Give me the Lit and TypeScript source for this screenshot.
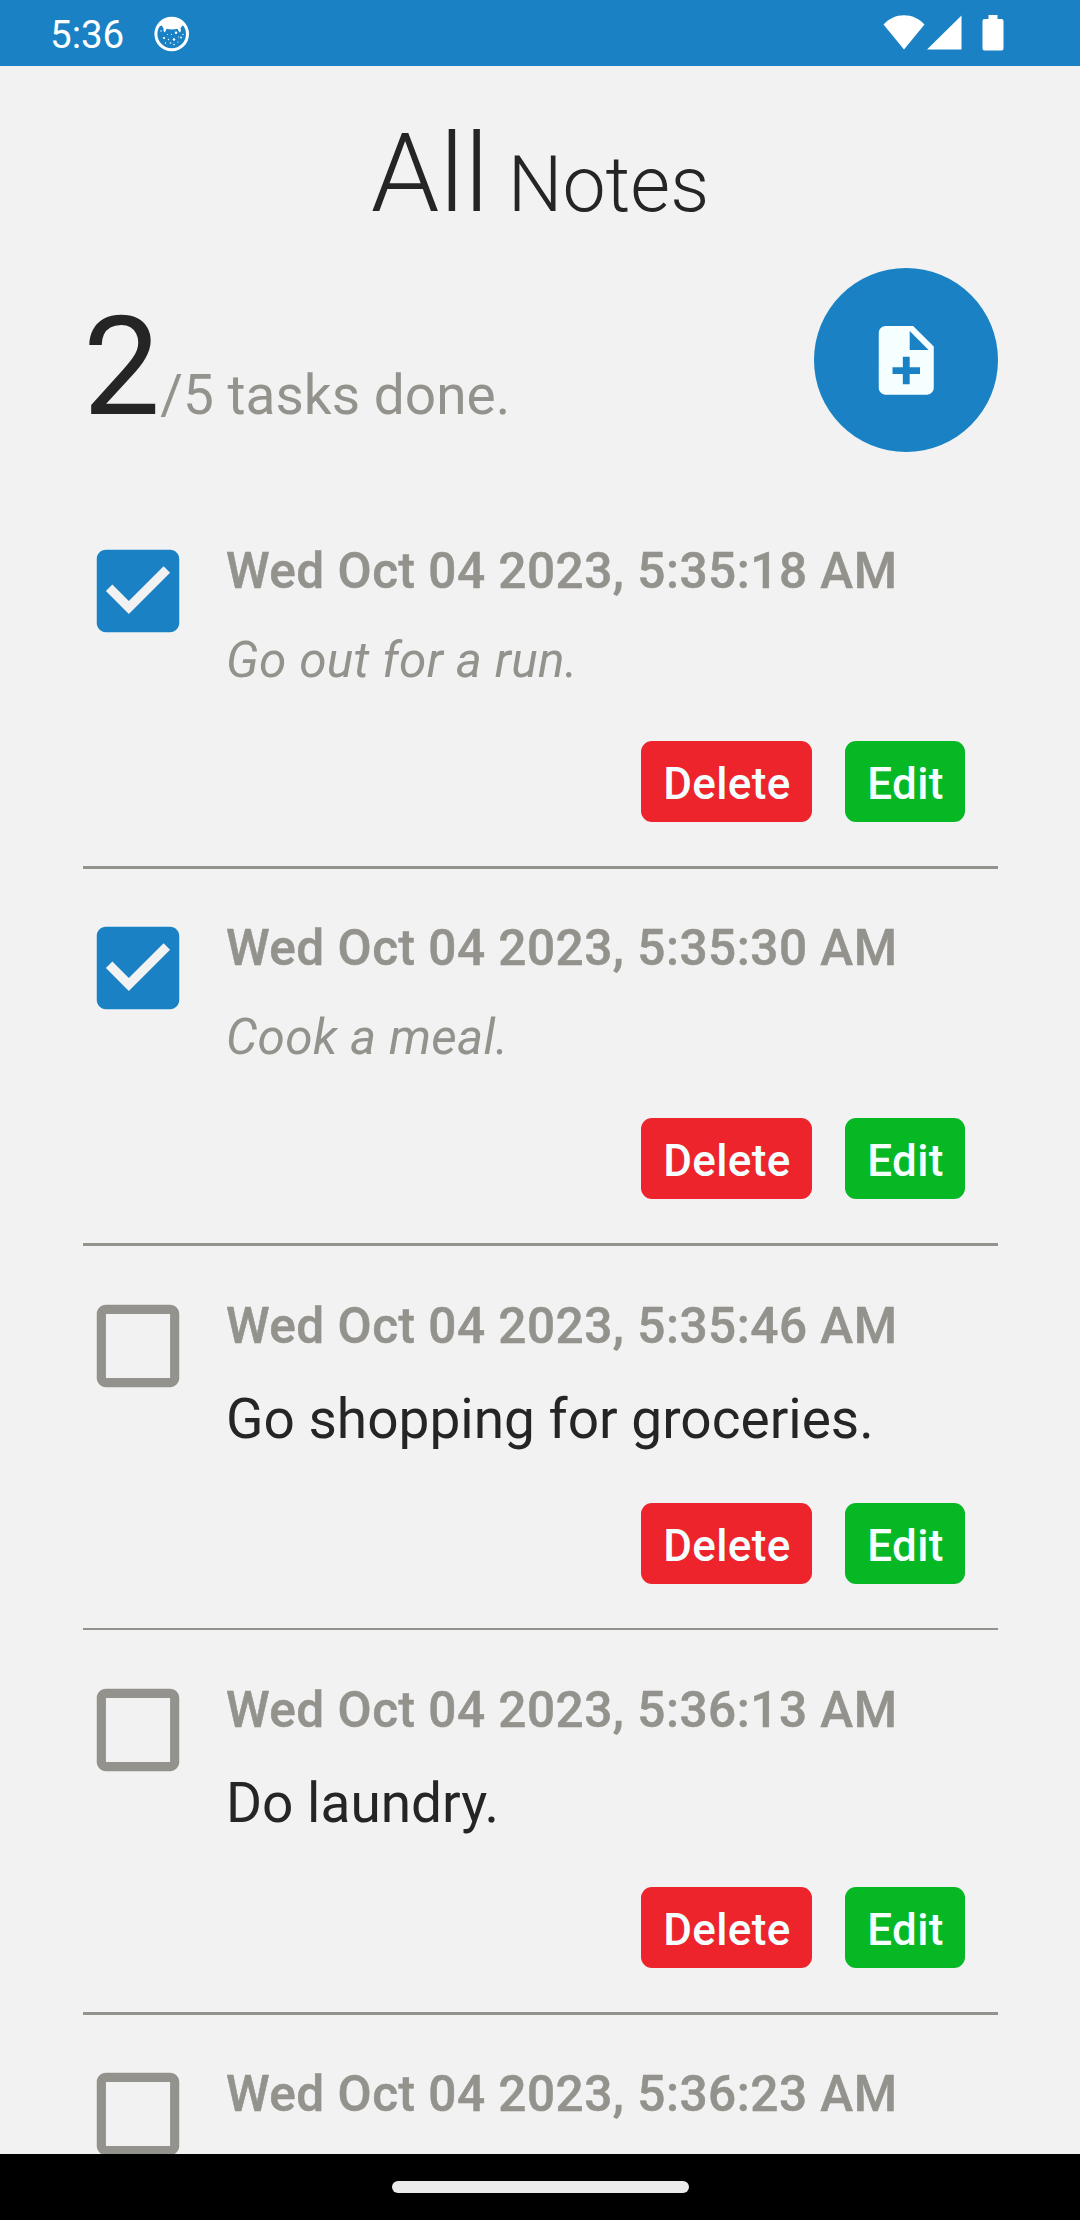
import { LitElement, html, css, svg, nothing } from "lit";
import { customElement, property } from "lit/decorators.js";
import { classMap } from "lit/directives/class-map.js";

interface Note {
  date: string;
  text?: string;
  done: boolean;
  layout: "first" | "second" | "third" | "fourth" | "peek";
}

const NOTES: Note[] = [
  { date: "Wed Oct 04 2023, 5:35:18 AM", text: "Go out for a run.", done: true, layout: "first" },
  { date: "Wed Oct 04 2023, 5:35:30 AM", text: "Cook a meal.", done: true, layout: "second" },
  { date: "Wed Oct 04 2023, 5:35:46 AM", text: "Go shopping for groceries.", done: false, layout: "third" },
  { date: "Wed Oct 04 2023, 5:36:13 AM", text: "Do laundry.", done: false, layout: "fourth" },
  { date: "Wed Oct 04 2023, 5:36:23 AM", done: false, layout: "peek" },
];

const BOX_CHECKED = svg`<path d="M19 3H5c-1.11 0-2 .9-2 2v14c0 1.1.89 2 2 2h14c1.11 0 2-.9 2-2V5c0-1.1-.89-2-2-2zm-9 14l-5-5 1.41-1.41L10 14.17l7.59-7.59L19 8l-9 9z"/>`;
const BOX_EMPTY = svg`<path d="M19 5v14H5V5h14m0-2H5c-1.1 0-2 .9-2 2v14c0 1.1.9 2 2 2h14c1.1 0 2-.9 2-2V5c0-1.1-.9-2-2-2z"/>`;

@customElement("status-bar")
export class StatusBar extends LitElement {
  static styles = css`
    :host {
      display: flex;
      justify-content: space-between;
      height: 66px;
      flex: none;
      background: #1a82c4;
      color: #fff;
    }
    .left, .right { display: flex; align-items: flex-start; }
    .left { padding-left: 50px; }
    .time { font-size: 38.5px; line-height: 46px; padding-top: 12px; width: 104px; }
    .debug { width: 36px; height: 36px; margin-top: 15.5px; }
    .right { padding-right: 76px; }
    .right svg { display: block; fill: #fff; }
    .wifi { width: 42px; height: 35px; margin-top: 15px; }
    .cell { width: 35px; height: 35px; margin: 15px 0 0 2.5px; }
    .battery { width: 22px; height: 36px; margin: 15px 0 0 20px; }
  `;

  render() {
    return html`
      <div class="left">
        <span class="time">5:36</span>
        <svg class="debug" viewBox="0 0 36 36">
          <circle cx="17.7" cy="18" r="15.8" fill="none" stroke="#fff" stroke-width="3" />
          <path fill="#fff" d="M4 11 C7 5 12 2 18 2 S29 5 32 11 L28.500 9.500 L26.500 12 L27 15 L25.500 16.500 L23.500 12.800 Q18 14.200 12.500 12.800 L11 16.500 L9.500 15 L9.500 12 L7.500 9.500 Z" />
          <g fill="#fff">
            <circle cx="10" cy="22" r="1.100" /><circle cx="22" cy="16.800" r="1.200" />
            <circle cx="20" cy="23.500" r="1.200" /><circle cx="27" cy="21.500" r=".9" />
            <circle cx="14.500" cy="23.500" r=".7" /><circle cx="17.500" cy="18.500" r=".6" />
            <circle cx="11.500" cy="27" r=".7" /><circle cx="16.500" cy="27" r=".8" />
            <circle cx="20" cy="28.500" r=".8" /><circle cx="24" cy="26" r=".6" />
            <circle cx="7" cy="15" r=".7" /><circle cx="29" cy="18.500" r=".7" />
            <circle cx="13.500" cy="18.500" r=".5" /><circle cx="24.500" cy="21" r=".5" />
          </g>
        </svg>
      </div>
      <div class="right">
        <svg class="wifi" viewBox="0 0 42 35"><path d="M21 34.500 .5 9.500C6 3.500 13 .2 21 .2S36 3.500 41.500 9.500z" /></svg>
        <svg class="cell" viewBox="0 0 35 35"><path d="M0 34.500 34.500 .5V34.500z" /></svg>
        <svg class="battery" viewBox="0 0 22 36"><path d="M6.500 0h9v4H19.500a2 2 0 0 1 2 2V33.500a2 2 0 0 1-2 2H2.500a2 2 0 0 1-2-2V6a2 2 0 0 1 2-2H6.500z" /></svg>
      </div>
    `;
  }
}

@customElement("note-item")
export class NoteItem extends LitElement {
  @property({ attribute: false }) note!: Note;

  static styles = css`
    :host { display: block; flex: none; }
    .note {
      box-sizing: border-box;
      display: flex;
      gap: 33px;
      padding-top: 44.5px;
      border-bottom: 3px solid #93928c;
    }
    .first, .second { height: 377px; }
    .third { height: 384px; padding-top: 45.5px; border-bottom-width: 2px; }
    .fourth { height: 385px; padding-top: 45.5px; }
    .box { width: 110px; height: 110px; margin-top: -1px; flex: none; fill: #93928c; }
    .done .box { fill: #1a82c4; }
    .body { flex: 1; display: flex; flex-direction: column; }
    .date {
      font-size: 49.5px;
      font-weight: 500;
      line-height: 58px;
      letter-spacing: 0.5px;
      -webkit-text-stroke: 0.5px #93928c;
      color: #93928c;
      white-space: nowrap;
      margin-top: 5.5px;
    }
    .text { font-size: 55px; line-height: 65px; color: #252525; margin-top: 31.5px; white-space: nowrap; }
    .done .text { font-size: 49.5px; line-height: 58px; letter-spacing: 0.3px; color: #93928c; font-style: italic; margin-top: 31px; }
    .actions { display: flex; justify-content: flex-end; gap: 33px; padding-right: 33px; margin-top: auto; margin-bottom: 44px; }
    .btn {
      border: 0;
      border-radius: 11px;
      height: 81px;
      padding: 4px 0 0 1px;
      color: #f5ffff;
      font: 500 44px/52px Roboto, sans-serif;
      letter-spacing: 0.35px;
      text-align: center;
    }
    .delete { width: 171px; background: #ed242b; }
    .edit { width: 120px; background: #05b824; }
  `;

  render() {
    const n = this.note;
    return html`
      <article class=${classMap({ note: true, done: n.done, [n.layout]: true })}>
        <svg class="box" viewBox="0 0 24 24">${n.done ? BOX_CHECKED : BOX_EMPTY}</svg>
        <div class="body">
          <div class="date">${n.date}</div>
          ${n.text
            ? html`
                <div class="text">${n.text}</div>
                <div class="actions">
                  <button class="btn delete">Delete</button>
                  <button class="btn edit">Edit</button>
                </div>
              `
            : nothing}
        </div>
      </article>
    `;
  }
}

@customElement("app-root")
export class AppRoot extends LitElement {
  static styles = css`
    :host {
      display: flex;
      flex-direction: column;
      width: 1080px;
      height: 2220px;
      overflow: hidden;
      background: #f2f2f2;
      font-family: Roboto, sans-serif;
      color: #252525;
    }
    .title {
      margin: 0;
      padding-top: 43px;
      height: 160px;
      text-align: center;
      font-size: 77px;
      font-weight: 300;
      line-height: 130px;
      flex: none;
      box-sizing: border-box;
    }
    .all { font-size: 110px; }
    .summary {
      display: flex;
      justify-content: space-between;
      align-items: flex-start;
      height: 184px;
      padding: 0 82px 0 83px;
      margin-top: 42px;
      flex: none;
    }
    .progress { font-size: 55px; line-height: 161px; color: #93928c; margin-top: 19px; }
    .count { font-size: 137.5px; color: #252525; }
    .add {
      width: 184px;
      height: 184px;
      border: 0;
      padding: 0;
      border-radius: 50%;
      background: #1a82c4;
      display: grid;
      place-items: center;
    }
    .add svg { width: 82.5px; height: 82.5px; fill: #f5ffff; display: block; }
    .list {
      flex: 1;
      min-height: 0;
      overflow: hidden;
      display: flex;
      flex-direction: column;
      padding: 40px 82px 0 83px;
    }
    .nav {
      flex: none;
      height: 66px;
      background: #000;
      display: flex;
      justify-content: center;
      align-items: flex-start;
    }
    .handle { width: 297px; height: 11.5px; margin-top: 27px; border-radius: 6px; background: #ebebeb; }
  `;

  render() {
    const done = NOTES.filter((n) => n.done).length;
    return html`
      <status-bar></status-bar>
      <h1 class="title"><span class="all">All</span> Notes</h1>
      <section class="summary">
        <div class="progress"><span class="count">${done}</span>/${NOTES.length} tasks done.</div>
        <button class="add" aria-label="Add note">
          <svg viewBox="0 0 24 24"><path d="M14 2H6c-1.100 0-1.990.9-1.990 2L4 20c0 1.100.89 2 1.990 2H18c1.100 0 2-.9 2-2V8l-6-6zm2 14h-3v3h-2v-3H8v-2h3v-3h2v3h3v2zm-3-7V3.500L18.500 9H13z" /></svg>
        </button>
      </section>
      <main class="list">
        ${NOTES.map((note) => html`<note-item .note=${note}></note-item>`)}
      </main>
      <div class="nav"><div class="handle"></div></div>
    `;
  }
}
